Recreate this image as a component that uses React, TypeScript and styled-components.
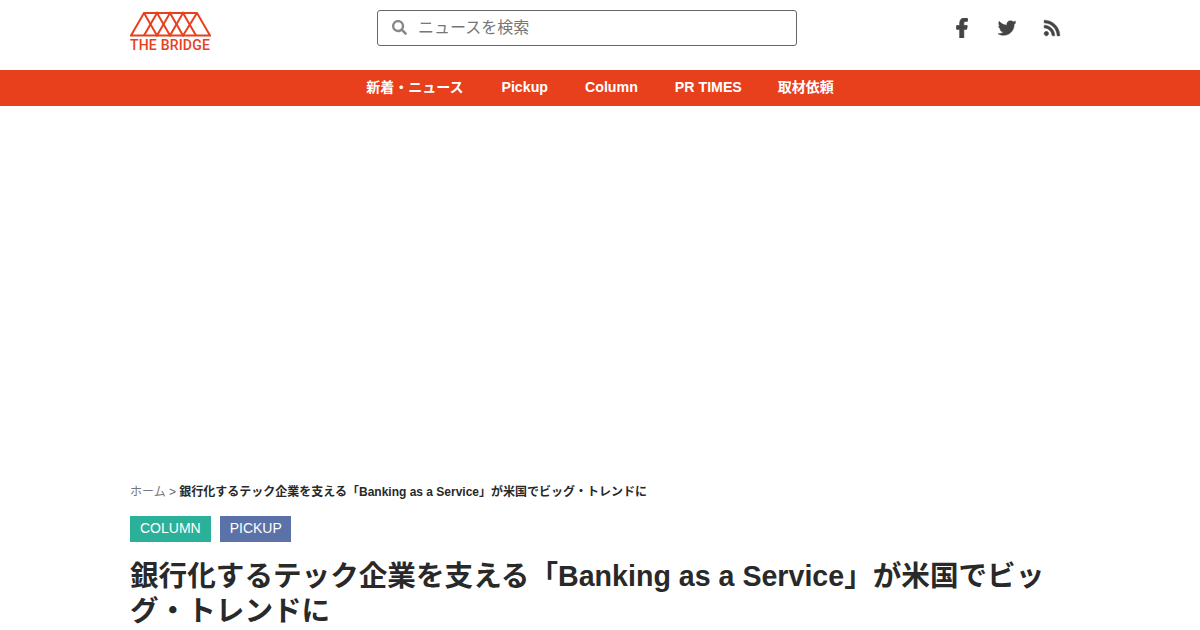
import styled, { createGlobalStyle } from "styled-components";
import { FaFacebookF, FaTwitter, FaRss, FaSearch } from "react-icons/fa";

const GlobalStyle = createGlobalStyle`
  html, body {
    margin: 0;
    padding: 0;
    background: #fff;
    overflow: hidden;
  }
  body {
    font-family: "Liberation Sans", "Noto Sans CJK JP", sans-serif;
    color: #292929;
  }
`;

const navItems = [
  { label: "新着・ニュース", latin: false },
  { label: "Pickup", latin: true },
  { label: "Column", latin: true },
  { label: "PR TIMES", latin: true },
  { label: "取材依頼", latin: false },
];

const App = () => {
  return (
    <Page>
      <GlobalStyle />
      <Header>
        <Logo>
          <svg width="81" height="26" viewBox="0 0 81 26" fill="none" stroke="#e8401c" strokeWidth="2">
            <path d="M1 24.5 L14 2 H67 L80 24.5 Z" />
            <path d="M14 2 L27 24.5 L40 2 L53 24.5 L67 2" />
            <path d="M14 24.5 L27 2 L40 24.5 L53 2 L66 24.5" />
          </svg>
          <LogoText>THE BRIDGE</LogoText>
        </Logo>
        <SearchBox>
          <FaSearch />
          <SearchInput placeholder="ニュースを検索" />
        </SearchBox>
        <Social>
          <FaFacebookF />
          <FaTwitter />
          <FaRss />
        </Social>
      </Header>
      <Nav>
        {navItems.map((item) => (
          <NavLink key={item.label} $latin={item.latin}>
            {item.label}
          </NavLink>
        ))}
      </Nav>
      <AdSpace />
      <Main>
        <Breadcrumb>
          <HomeLink>ホーム</HomeLink> &gt;{" "}
          <b>銀行化するテック企業を支える「Banking as a Service」が米国でビッグ・トレンドに</b>
        </Breadcrumb>
        <Tags>
          <Tag $bg="#2bb09a">COLUMN</Tag>
          <Tag $bg="#5a72a8">PICKUP</Tag>
        </Tags>
        <Title>銀行化するテック企業を支える「Banking as a Service」が米国でビッグ・トレンドに</Title>
      </Main>
    </Page>
  );
};

export default App;

const Page = styled.div`
  width: 1200px;
  height: 630px;
  overflow: hidden;
`;
const Header = styled.header`
  height: 70px;
  width: 940px;
  margin: 0 auto;
  display: flex;
`;
const Logo = styled.div`
  width: 81px;
  padding-top: 11px;
  display: flex;
  flex-direction: column;
  color: #e8401c;
  svg {
    display: block;
  }
`;
const LogoText = styled.div`
  font-family: Roboto, "Liberation Sans", sans-serif;
  font-size: 14px;
  font-weight: 500;
  line-height: 14px;
  margin-top: 1px;
  letter-spacing: 0.2px;
  white-space: nowrap;
`;
const SearchBox = styled.div`
  width: 420px;
  height: 36px;
  margin: 10px 0 0 166px;
  box-sizing: border-box;
  border: 1px solid #666;
  border-radius: 3px;
  display: flex;
  align-items: center;
  padding-left: 14px;
  gap: 9px;
  color: #888;
  svg {
    font-size: 15px;
    margin-top: -2px;
  }
`;
const SearchInput = styled.input`
  border: 0;
  outline: 0;
  flex: 1;
  font-size: 16px;
  font-family: inherit;
  &::placeholder {
    color: #777;
  }
`;
const Social = styled.div`
  margin-left: auto;
  padding: 19px 9px 0 0;
  height: 18px;
  display: flex;
  align-items: center;
  gap: 27px;
  color: #444;
  font-size: 18px;
  svg {
    stroke: currentColor;
    stroke-width: 14;
  }
  svg:first-child {
    font-size: 20px;
    margin-right: -1px;
    stroke-width: 24;
  }
`;
const Nav = styled.nav`
  height: 36px;
  box-sizing: border-box;
  padding-bottom: 2px;
  background: #e8401c;
  display: flex;
  align-items: center;
  justify-content: center;
  gap: 37px;
`;
const NavLink = styled.a<{ $latin: boolean }>`
  color: #fff;
  font-size: ${(p) => (p.$latin ? "14.2px" : "14px")};
  line-height: 16px;
  font-weight: 700;
  &:first-child {
    margin-right: 1px;
  }
  &:last-child {
    margin-left: -1px;
  }
`;
const AdSpace = styled.div`
  height: 376px;
`;
const Main = styled.main`
  width: 940px;
  margin: 0 auto;
`;
const Breadcrumb = styled.div`
  font-size: 12px;
  line-height: 18px;
  padding-top: 1px;
  color: #666;
  b {
    color: #292929;
  }
`;
const HomeLink = styled.a`
  color: #777;
`;
const Tags = styled.div`
  display: flex;
  gap: 9px;
  margin-top: 15px;
`;
const Tag = styled.span<{ $bg: string }>`
  background: ${(p) => p.$bg};
  color: #fff;
  font-size: 14px;
  line-height: 25px;
  height: 26px;
  padding: 0 10px;
  &:last-child {
    padding-right: 9.5px;
  }
`;
const Title = styled.h1`
  margin: 16px 0 0;
  padding-top: 1px;
  font-size: 28.6px;
  line-height: 35px;
  font-weight: 700;
  color: #292929;
`;
